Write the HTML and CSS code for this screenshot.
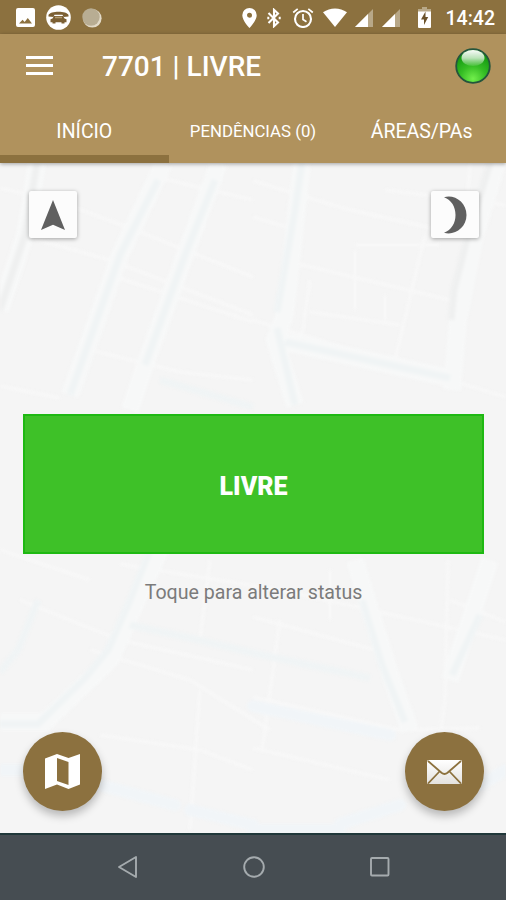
FILE: index.html
```
<!DOCTYPE html>
<html lang="pt-BR">
<head>
  <meta charset="UTF-8" />
  <meta name="viewport" content="width=device-width, initial-scale=1.0" />
  <title>7701 | LIVRE</title>
  <link rel="stylesheet" href="styles.css">
</head>
<body>
  <div class="app">
    <!-- Barra de status -->
    <div class="status-bar">
      <div class="status-left">
        <svg width="19" height="19" viewBox="0 0 19 19"><path fill="#fff" fill-rule="evenodd" d="M2 0h15a2 2 0 0 1 2 2v15a2 2 0 0 1-2 2H2a2 2 0 0 1-2-2V2a2 2 0 0 1 2-2zM3 15.500h13l-4.200-5.500-3.200 4-2-2.300z"/></svg>
        <svg width="25" height="25" viewBox="0 0 25 25"><circle cx="12.500" cy="12.500" r="12.300" fill="#fff"/><path fill="#7c6034" d="M2.500 10C4 5.500 21 5.500 22.500 10v1.500l-5 .5-1-2.200h-8l-1 2.200-5-.5z"/><path fill="#7c6034" d="M8 11h9l1.500 2.500 2 .8v3h-2v1.200h-3v-1.200h-6v1.200h-3v-1.200h-2v-3l2-.8z"/><path d="M9 12.500h7" stroke="#b39b6d" stroke-width="1.500"/></svg>
        <svg width="20" height="20" viewBox="0 0 20 20"><circle cx="10.300" cy="10.300" r="9.300" fill="#e2dac8"/><circle cx="9" cy="9" r="8.700" fill="#b8ad93"/></svg>
      </div>
      <div class="status-right">
        <svg class="icon-pin" width="15" height="20" viewBox="0 0 15 20"><path fill="#fff" fill-rule="evenodd" d="M7.500 0A7.200 7.200 0 0 0 .3 7.200C.3 12.500 7.500 20 7.500 20s7.200-7.500 7.200-12.800A7.200 7.200 0 0 0 7.500 0zm0 4.700a2.500 2.500 0 1 1 0 5 2.500 2.500 0 0 1 0-5z"/></svg>
        <svg class="icon-bluetooth" width="14" height="20" viewBox="0 0 14 20"><path fill="none" stroke="#fff" stroke-width="2.100" d="M1.500 5l9.500 9.500-4 3.700V1.800l4 3.700L1.500 15"/><path d="M12.700 8.800v2.400M1.300 8.800v2.400" stroke="#fff" stroke-width="2"/></svg>
        <svg class="icon-alarm" width="22" height="20" viewBox="0 0 22 20"><circle cx="11" cy="11" r="8" fill="none" stroke="#fff" stroke-width="2.100"/><path fill="none" stroke="#fff" stroke-width="1.700" d="M11 6v5.500l3.500 2.300M1.200 4.500l4.500-3.700M20.800 4.500L16.300.8"/></svg>
        <svg class="icon-wifi" width="26" height="19" viewBox="0 0 26 19"><path fill="#fff" d="M1 4.300C8-.8 18-.8 25 4.300L13 19z"/></svg>
        <svg class="icon-signal" width="18" height="18" viewBox="0 0 18 18"><path fill="#b8a888" d="M0 18L18 0v18z"/><path fill="#fff" d="M0 18L13 5v13z"/></svg>
        <svg class="icon-signal" width="18" height="18" viewBox="0 0 18 18"><path fill="#b8a888" d="M0 18L18 0v18z"/><path fill="#fff" d="M0 18L13 5v13z"/></svg>
        <svg class="icon-battery" width="13" height="21" viewBox="0 0 13 21"><path fill="#b8a888" d="M4 0h5v2h4v4H0V2h4z"/><path fill="#fff" d="M0 4.500h13V20a1 1 0 0 1-1 1H1a1 1 0 0 1-1-1z"/><path fill="#6b522a" d="M7.500 4.500L3 12.500h3V18l4.200-8H7.500z"/></svg>
        <span class="clock">14:42</span>
      </div>
    </div>

    <!-- Cabeçalho -->
    <header class="header">
      <div class="toolbar">
        <svg class="menu-icon" width="27" height="20" viewBox="0 0 27 20"><path stroke="#fff" stroke-width="3" d="M0 1.500h27M0 9.500h27M0 17.500h27"/></svg>
        <h1 class="title">7701 | LIVRE</h1>
        <svg class="led" width="36" height="36" viewBox="0 0 36 36">
          <defs>
            <radialGradient id="ledBody" cx=".5" cy=".88" r=".85">
              <stop offset="0" stop-color="#72ef4c"/>
              <stop offset=".45" stop-color="#35bd24"/>
              <stop offset="1" stop-color="#0a900c"/>
            </radialGradient>
            <linearGradient id="ledShine" x1="0" y1="0" x2="0" y2="1">
              <stop offset="0" stop-color="#fff" stop-opacity=".98"/>
              <stop offset=".5" stop-color="#fff" stop-opacity=".7"/>
              <stop offset="1" stop-color="#fff" stop-opacity=".1"/>
            </linearGradient>
          </defs>
          <circle cx="18" cy="18" r="16.800" fill="url(#ledBody)" stroke="#24553c" stroke-width="1.800"/>
          <ellipse cx="18" cy="10" rx="11.500" ry="8" fill="url(#ledShine)"/>
        </svg>
      </div>
      <nav class="tabs">
        <a class="tab active">INÍCIO</a>
        <a class="tab tab-small">PENDÊNCIAS (0)</a>
        <a class="tab">ÁREAS/PAs</a>
      </nav>
    </header>

    <main class="content">
      <!-- Mapa de fundo -->
      <svg class="map" viewBox="0 163 506 670" preserveAspectRatio="none">
        <g class="roads">
          <path d="M0 188L60 202 130 228 253 277M30 238L110 260 253 315M110 275L253 322M0 386L60 398M90 350L180 372 253 380M160 178L253 200"/>
          <path d="M253 181L350 210 440 230M253 217L290 228M290 262L450 300M310 312L400 325M253 320L506 397M355 245H440M425 235L395 360M355 250V310M310 280L302 335M385 295V320M470 163L460 300 452 380M385 190L506 205"/>
          <path d="M120 564L280 590 506 640M20 600L120 640 253 670M90 650L190 680 270 730M0 550L90 580M100 735L200 750 253 770M200 690L190 830M253 617L375 650M253 697L400 730 480 728M253 748L390 780M280 620L262 750M448 560L445 700 440 735M210 560L200 640M330 570V620M450 600L506 622"/>
        </g>
        <g class="road-edges">
          <path d="M37 163L25 235 0 310M164 163L120 255 70 395M219 163L185 255 145 365 130 410M302 163L285 315 275 340 295 405M497 163L475 235 458 320 452 390M285 342L450 378M160 550L110 660 45 722H0M355 560L370 610 392 680 410 730M490 560L450 680"/>
        </g>
        <g class="roads-grey">
          <path d="M37 163L25 235 0 310M490 163L468 235 454 290 451 320"/>
        </g>
        <g class="roads-blue">
          <path d="M158 180L120 255 70 395M215 180L185 255 145 365M302 163L295 210 277 312M277 328L295 405M285 342L450 378M38 600L18 650 0 672M130 600L108 650 85 678 38 724H0M362 600L382 665 405 722M480 615L452 675M130 625L190 638 253 653 370 678M160 380L253 407M150 550L130 600"/>
        </g>
        <g class="water">
          <path d="M253 706L390 735M100 785L175 805M190 810L253 825M340 824L400 805M253 830H340M480 785L506 770M0 770H25"/>
        </g>
      </svg>

      <div class="map-buttons">
        <button class="map-btn" aria-label="Localização">
          <svg width="24" height="30" viewBox="0 0 24 30"><path fill="#606060" d="M12 0l12 30-12-5.200L0 30z"/></svg>
        </button>
        <button class="map-btn" aria-label="Modo noturno">
          <svg width="24" height="38" viewBox="0 0 24 38"><path fill="#606060" d="M1 1.300C11-2 23.500 6 23.500 19S11 40 1 36.700C8.500 34 12.500 27 12.500 19S8.500 4 1 1.300z"/></svg>
        </button>
      </div>

      <button class="status-btn">LIVRE</button>
      <p class="hint">Toque para alterar status</p>

      <div class="fab-row">
        <button class="fab" aria-label="Mapa">
          <svg width="35" height="35" viewBox="0 0 35 35"><path fill="#fff" fill-rule="evenodd" d="M0 4.500L12 0l11.500 4L35 0v30.500L23.500 35 12 30.500 0 35zM12 4v23l11.500 4V8z"/></svg>
        </button>
        <button class="fab" aria-label="Mensagens">
          <svg width="35" height="24" viewBox="0 0 35 24">
            <defs>
              <linearGradient id="mail" x1="0" y1="0" x2="0" y2="1">
                <stop offset="0" stop-color="#fff"/>
                <stop offset="1" stop-color="#e4e2df"/>
              </linearGradient>
            </defs>
            <rect width="35" height="24" rx="1.500" fill="url(#mail)"/>
            <path fill="none" stroke="#8c713d" stroke-width="1.800" d="M1 1l13.500 11.800q3 2.400 6 0L34 1M1 23.500l11.500-12M34 23.500l-11.500-12"/>
          </svg>
        </button>
      </div>
    </main>

    <!-- Barra de navegação -->
    <div class="nav-bar">
      <svg width="22" height="24" viewBox="0 0 22 24"><path fill="none" stroke="#a5abae" stroke-width="1.900" stroke-linejoin="round" d="M19 2v20L2 12z"/></svg>
      <svg width="22" height="22" viewBox="0 0 22 22"><circle cx="11" cy="11" r="9.800" fill="none" stroke="#a5abae" stroke-width="1.900"/></svg>
      <svg width="22" height="22" viewBox="0 0 22 22"><rect x="2" y="2" width="17.500" height="17.500" rx="1" fill="none" stroke="#a5abae" stroke-width="1.900"/></svg>
    </div>
  </div>
</body>
</html>
```
FILE: styles.css
```
:root {
  --primary-color: #b0925d;
  --primary-dark: #8c713f;
  --free-color: #3ec128;
  --free-border: #1eb912;
  --nav-color: #464d52;
}
* {
  box-sizing: border-box;
  margin: 0;
  padding: 0;
}
body {
  font-family: Roboto, "Liberation Sans", sans-serif;
  background-color: #f5f5f5;
  color: #fff;
}
button {
  border: none;
  font-family: inherit;
  cursor: pointer;
}
svg {
  display: block;
  flex-shrink: 0;
}
.app {
  display: flex;
  flex-direction: column;
  width: 100%;
  height: 900px;
  overflow: hidden;
}
.status-bar {
  display: flex;
  justify-content: space-between;
  height: 34px;
  padding: 1px 11px 0 16px;
  background-color: var(--primary-dark);
}
.status-left,
.status-right {
  display: flex;
  align-items: center;
}
.status-left {
  gap: 11px;
}
.icon-pin {
  margin-right: 10px;
}
.icon-bluetooth {
  margin-right: 11px;
}
.icon-alarm {
  margin-right: 8px;
}
.icon-wifi {
  margin-right: 7px;
}
.icon-signal {
  margin-right: 9px;
}
.icon-signal + .icon-battery {
  margin: 0 15px 0 9px;
}
.clock {
  padding-top: 2px;
  font-size: 19.500px;
  font-weight: 500;
  line-height: 34px;
}
.header {
  position: relative;
  z-index: 1;
  height: 129px;
  background-color: var(--primary-color);
  box-shadow: 0 1px 4px rgba(0, 0, 0, 0.35);
}
.toolbar {
  display: flex;
  align-items: center;
  height: 63px;
  padding: 0 15px 0 26px;
}
.title {
  flex: 1;
  padding-top: 1px;
  margin-left: 49px;
  font-size: 28px;
  font-weight: 500;
  line-height: 63px;
  white-space: nowrap;
}
.tabs {
  display: grid;
  grid-template-columns: repeat(3, 1fr);
  height: 66px;
}
.tab {
  height: 66px;
  padding-top: 6px;
  border-bottom: 8px solid transparent;
  font-size: 19.500px;
  line-height: 58px;
  text-align: center;
  white-space: nowrap;
}
.tab-small {
  padding-top: 5px;
  font-size: 16.800px;
}
.tab.active {
  border-bottom-color: var(--primary-dark);
}
.content {
  position: relative;
  display: flex;
  flex-direction: column;
  height: 670px;
  padding: 28px 22px 22px 23px;
}
.map {
  position: absolute;
  top: 0;
  left: 0;
  z-index: -1;
  width: 100%;
  height: 100%;
  fill: none;
  filter: blur(1.5px);
}
.roads {
  stroke: #f8f8f8;
  stroke-width: 3;
}
.road-edges {
  stroke: #f7f8f8;
  stroke-width: 18;
}
.roads-grey {
  stroke: #eff0f0;
  stroke-width: 7;
}
.roads-blue {
  stroke: #f0f4f5;
  stroke-width: 7;
}
.water {
  stroke: #f1f5f8;
  stroke-width: 12;
  stroke-linecap: round;
}
.map-buttons {
  display: flex;
  justify-content: space-between;
  padding: 0 5px 0 6px;
}
.map-btn {
  display: flex;
  align-items: center;
  justify-content: center;
  width: 48px;
  height: 47px;
  border-radius: 2px;
  background-color: #fcfcfc;
  box-shadow: 0 1px 4px rgba(0, 0, 0, 0.35);
}
.status-btn {
  height: 140px;
  padding-top: 5px;
  margin-top: 176px;
  border: 2px solid var(--free-border);
  background-color: var(--free-color);
  color: #fff;
  font-size: 25px;
  font-weight: 900;
}
.hint {
  margin-top: 26px;
  color: #7b7b7b;
  font-size: 19.600px;
  line-height: 26px;
  text-align: center;
}
.fab-row {
  display: flex;
  justify-content: space-between;
  margin-top: auto;
}
.fab {
  display: flex;
  align-items: center;
  justify-content: center;
  width: 79px;
  height: 79px;
  border-radius: 50%;
  background-color: var(--primary-dark);
  box-shadow: 0 5px 9px rgba(0, 0, 0, 0.25);
}
.nav-bar {
  display: flex;
  align-items: center;
  justify-content: center;
  gap: 104px;
  height: 67px;
  padding: 0 0 2px 2px;
  border-top: 2px solid #20383a;
  background-color: var(--nav-color);
}
```
